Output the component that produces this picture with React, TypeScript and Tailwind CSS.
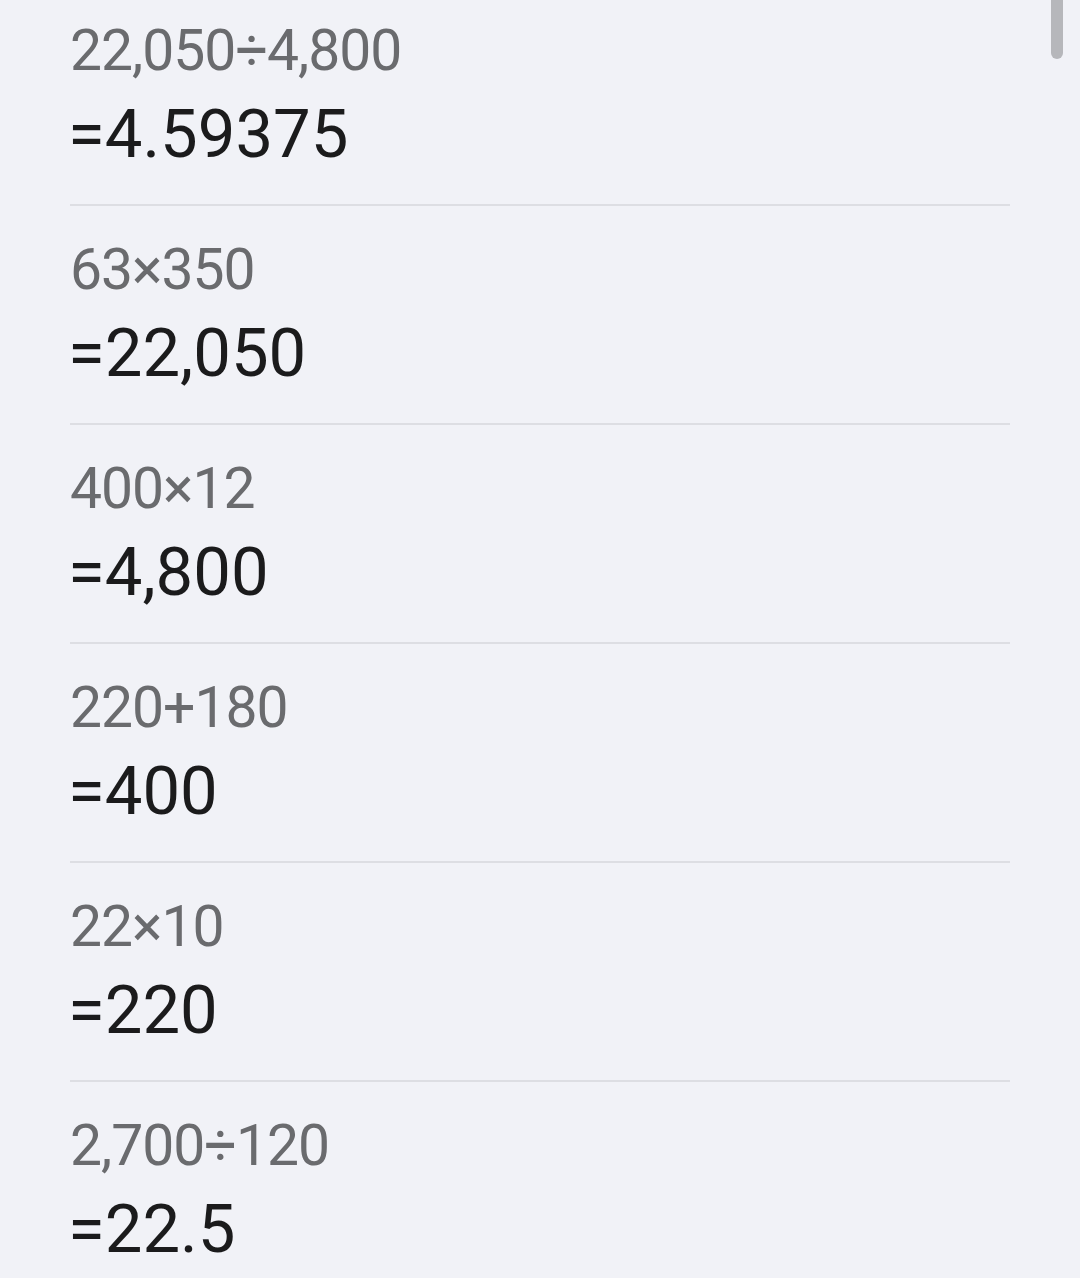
const history = [
  { expr: "22,050÷4,800", result: "4.59375" },
  { expr: "63×350", result: "22,050" },
  { expr: "400×12", result: "4,800" },
  { expr: "220+180", result: "400" },
  { expr: "22×10", result: "220" },
  { expr: "2,700÷120", result: "22.5" },
];

export default function App() {
  return (
    <div
      className="relative h-[1278px] w-[1080px] overflow-hidden bg-[#f1f2f7]"
      style={{ fontFamily: "Roboto, 'Noto Sans', sans-serif" }}
    >
      {/* scroll thumb */}
      <div className="absolute right-[17px] top-0 h-[59px] w-[12px] rounded-b-full bg-[#b6b7bb]" />

      {/* history list, scrolled slightly */}
      <div className="-mt-[13px] px-[70px]">
        {history.map((item, i) => (
          <div
            key={i}
            className="flex h-[219px] flex-col border-b-2 border-[#dddee3] pt-[32px]"
          >
            <div className="text-[57px] leading-[64px] tracking-[-1px] text-[#6a6b6e]">
              {item.expr}
            </div>
            <div className="mt-[13px] -ml-[2px] text-[67px] leading-[76px] text-[#1b1b1c]">
              ={item.result}
            </div>
          </div>
        ))}
      </div>
    </div>
  );
}
